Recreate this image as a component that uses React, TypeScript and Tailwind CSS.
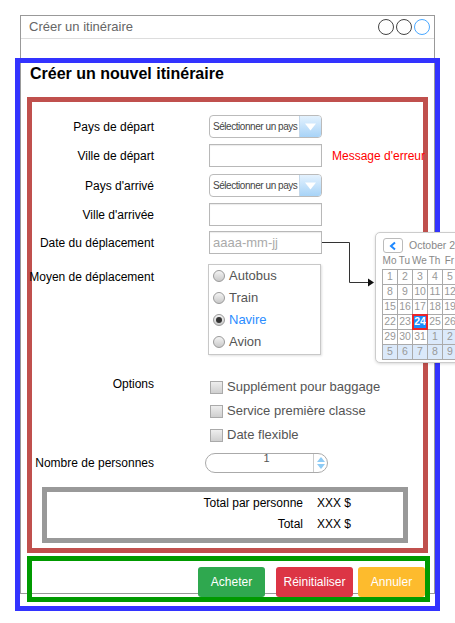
import React from 'react';

function Label({ children, className = '' }: { children: React.ReactNode; className?: string }) {
  return (
    <div className={`flex w-[122px] shrink-0 justify-end whitespace-nowrap text-[12px] text-black ${className}`}>
      {children}
    </div>
  );
}

function CountrySelect() {
  return (
    <div className="ml-[55px] flex h-[23px] w-[113px] shrink-0 items-center overflow-hidden rounded-[4px] border border-[#bbb] bg-white">
      <span className="flex-1 whitespace-nowrap pl-[3px] text-[10px] tracking-[-0.45px] text-[#444]">Sélectionner un pays</span>
      <span className="flex h-full w-[22px] items-center justify-center border-l border-[#c4d8ea] bg-linear-to-b from-[#e4f2fe] to-[#a7d3f7]">
        <svg width="11" height="8" viewBox="0 0 11 8">
          <path d="M0 0.5 H11 L5.5 7.5 Z" fill="#ffffff" />
        </svg>
      </span>
    </div>
  );
}

function TextInput({ placeholder }: { placeholder?: string }) {
  return (
    <div className="ml-[55px] flex h-[23px] w-[113px] shrink-0 items-center border border-[#b8b8b8] bg-white pl-[3px] shadow-[inset_0_1px_1px_rgba(0,0,0,0.08)]">
      {placeholder && <span className="text-[13px] text-[#aaa]">{placeholder}</span>}
    </div>
  );
}

function Radio({ label, checked = false }: { label: string; checked?: boolean }) {
  return (
    <div className="flex h-[22px] items-center gap-[4px]">
      <span className="flex h-[12px] w-[12px] items-center justify-center rounded-full border border-[#9a9a9a] bg-linear-to-b from-[#f4f4f4] to-[#c9c9c9]">
        {checked && <span className="h-[6px] w-[6px] rounded-full bg-[#333]" />}
      </span>
      <span className={`text-[13px] ${checked ? 'text-[#2a8cff]' : 'text-[#555]'}`}>{label}</span>
    </div>
  );
}

function Check({ label }: { label: string }) {
  return (
    <div className="flex h-[24px] items-center gap-[4px] pl-[1px]">
      <span className="h-[13px] w-[13px] border border-[#aaa] bg-linear-to-b from-[#eeeeee] to-[#cfcfcf]" />
      <span className="whitespace-nowrap text-[13px] text-[#555]">{label}</span>
    </div>
  );
}

const days = [
  [1, 2, 3, 4, 5, 6, 7],
  [8, 9, 10, 11, 12, 13, 14],
  [15, 16, 17, 18, 19, 20, 21],
  [22, 23, 24, 25, 26, 27, 28],
  [29, 30, 31, 1, 2, 3, 4],
  [5, 6, 7, 8, 9, 10, 11],
];

function Calendar() {
  return (
    <div className="absolute left-[375px] top-[232px] h-[131px] w-[122px] rounded-[5px] border border-[#ccc] bg-white pl-[6px] pt-[5px] shadow-[0_1px_3px_rgba(0,0,0,0.15)]">
      <div className="flex h-[15px] items-center">
        <span className="ml-[1px] flex h-[15px] w-[20px] items-center justify-center rounded-[3px] border border-[#bbb] bg-white">
          <svg width="8" height="10" viewBox="0 0 8 10">
            <path d="M6 1.5 L2 5 L6 8.5" fill="none" stroke="#1e88ff" strokeWidth="2" />
          </svg>
        </span>
        <span className="ml-[6px] whitespace-nowrap text-[10.5px] text-[#888]">October 2018</span>
      </div>
      <div className="mt-[1px] flex h-[14px] items-center">
        {['Mo', 'Tu', 'We', 'Th', 'Fr', 'Sa', 'Su'].map((d) => (
          <span key={d} className="w-[15px] shrink-0 text-center text-[10px] leading-[14px] text-[#888]">
            {d}
          </span>
        ))}
      </div>
      <div className="mt-[1px] grid w-max auto-rows-[14px] grid-cols-[repeat(7,14px)] gap-px border border-[#aaa] bg-[#aaa]">
        {days.map((row, r) =>
          row.map((n, c) => {
            const next = (r === 4 && c >= 3) || r === 5;
            const sel = r === 3 && n === 24;
            return (
              <span
                key={`${r}-${c}`}
                className={
                  sel
                    ? 'flex items-center justify-center bg-[#1a8cff] text-[10.5px] font-bold text-white outline-2 -outline-offset-1 outline-[#e8262b]'
                    : next
                      ? 'flex items-center justify-center bg-[#dbe9fa] text-[10.5px] text-[#999]'
                      : 'flex items-center justify-center bg-white text-[10.5px] text-[#999]'
                }
              >
                {n}
              </span>
            );
          }),
        )}
      </div>
    </div>
  );
}

export default function App() {
  return (
    <div className="relative h-[623px] w-[455px] overflow-hidden bg-white font-['Liberation_Sans',Arial,sans-serif]">
      <div className="ml-[20px] mt-[15px] h-[579px] w-[415px] border border-[#999]">
        <div className="flex h-[23px] items-center justify-between border-b border-[#ddd] pl-[8px] pr-[4px]">
          <span className="text-[13px] text-[#666]">Créer un itinéraire</span>
          <div className="flex gap-[2px]">
            <span className="h-[16px] w-[16px] rounded-full border border-[#444]" />
            <span className="h-[16px] w-[16px] rounded-full border border-[#444]" />
            <span className="h-[16px] w-[16px] rounded-full border border-[#4aa8ff]" />
          </div>
        </div>

        <div className="-ml-[6px] mt-[19px] h-[553px] w-[425px] border-[5px] border-[#3333ff]">
          <h1 className="mt-[1px] pl-[10px] text-[16px] font-bold leading-[20px] text-black">Créer un nouvel itinéraire</h1>

          <div className="ml-[7px] mt-[13px] flex h-[456px] w-[401px] flex-col border-[5px] border-[#c0504d] pt-[13px]">
            <div className="flex h-[23px] items-center">
              <Label>Pays de départ</Label>
              <CountrySelect />
            </div>
            <div className="mt-[6px] flex h-[23px] items-center">
              <Label>Ville de départ</Label>
              <TextInput />
              <span className="ml-[10px] shrink-0 whitespace-nowrap text-[12px] text-[#ff0000]">Message d'erreur</span>
            </div>
            <div className="mt-[7px] flex h-[23px] items-center">
              <Label>Pays d'arrivé</Label>
              <CountrySelect />
            </div>
            <div className="mt-[6px] flex h-[23px] items-center">
              <Label>Ville d'arrivée</Label>
              <TextInput />
            </div>
            <div className="mt-[5px] flex h-[23px] items-center">
              <Label>Date du déplacement</Label>
              <TextInput placeholder="aaaa-mm-jj" />
            </div>
            <div className="mt-[10px] flex items-start">
              <Label className="h-[26px] items-center">Moyen de déplacement</Label>
              <div className="ml-[54px] flex h-[91px] w-[113px] shrink-0 flex-col border border-[#c8c8c8] pl-[4px] shadow-[1px_1px_2px_rgba(0,0,0,0.12)]">
                <Radio label="Autobus" />
                <Radio label="Train" />
                <Radio label="Navire" checked />
                <Radio label="Avion" />
              </div>
            </div>
            <div className="mt-[20px] flex items-start">
              <Label className="h-[18px] items-center">Options</Label>
              <div className="ml-[55px] flex flex-col">
                <Check label="Supplément pour baggage" />
                <Check label="Service première classe" />
                <Check label="Date flexible" />
              </div>
            </div>
            <div className="mt-[6px] flex h-[20px] items-center">
              <Label>Nombre de personnes</Label>
              <div className="ml-[51px] flex h-[20px] w-[123px] shrink-0 overflow-hidden rounded-full border border-[#aaa] bg-white">
                <span className="-mt-[1px] flex-1 pl-[14px] text-center text-[11px] leading-[11px] text-[#555]">1</span>
                <span className="flex w-[14px] flex-col items-center justify-center gap-[2px] border-l border-[#ccc]">
                  <svg width="8" height="5" viewBox="0 0 8 5">
                    <path d="M0 5 L4 0 L8 5 Z" fill="#8ecbf5" />
                  </svg>
                  <svg width="8" height="5" viewBox="0 0 8 5">
                    <path d="M0 0 L8 0 L4 5 Z" fill="#8ecbf5" />
                  </svg>
                </span>
              </div>
            </div>
            <div className="ml-[10px] mt-[14px] flex h-[56px] w-[366px] flex-col gap-[1px] border-[5px] border-[#999] pt-[1px] text-[12px] text-black">
              <div className="flex h-[20px] items-center">
                <span className="w-[256px] text-right">Total par personne</span>
                <span className="ml-[14px]">XXX $</span>
              </div>
              <div className="flex h-[20px] items-center">
                <span className="w-[256px] text-right">Total</span>
                <span className="ml-[14px]">XXX $</span>
              </div>
            </div>
          </div>

          <div className="ml-[7px] mt-[3px] flex h-[46px] w-[403px] justify-end border-[5px] border-[#009a00] pt-[6px]">
            <button className="h-[30px] w-[67px] rounded-[3px] bg-[#2fa84f] text-[12px] text-white">Acheter</button>
            <button className="ml-[11px] h-[30px] w-[77px] rounded-[3px] bg-[#dc3545] text-[12px] text-white">Réinitialiser</button>
            <button className="ml-[5px] h-[30px] w-[67px] rounded-[3px] bg-[#fdbb2d] text-[12px] text-white">Annuler</button>
          </div>
        </div>
      </div>

      <svg className="absolute left-[322px] top-[236px]" width="53" height="52" viewBox="0 0 53 52">
        <path d="M0 6.5 H27.5 V46.5 H47" fill="none" stroke="#333" strokeWidth="1" />
        <path d="M46 42.5 L52 46.5 L46 50.5 Z" fill="#111" />
      </svg>

      <Calendar />
    </div>
  );
}
